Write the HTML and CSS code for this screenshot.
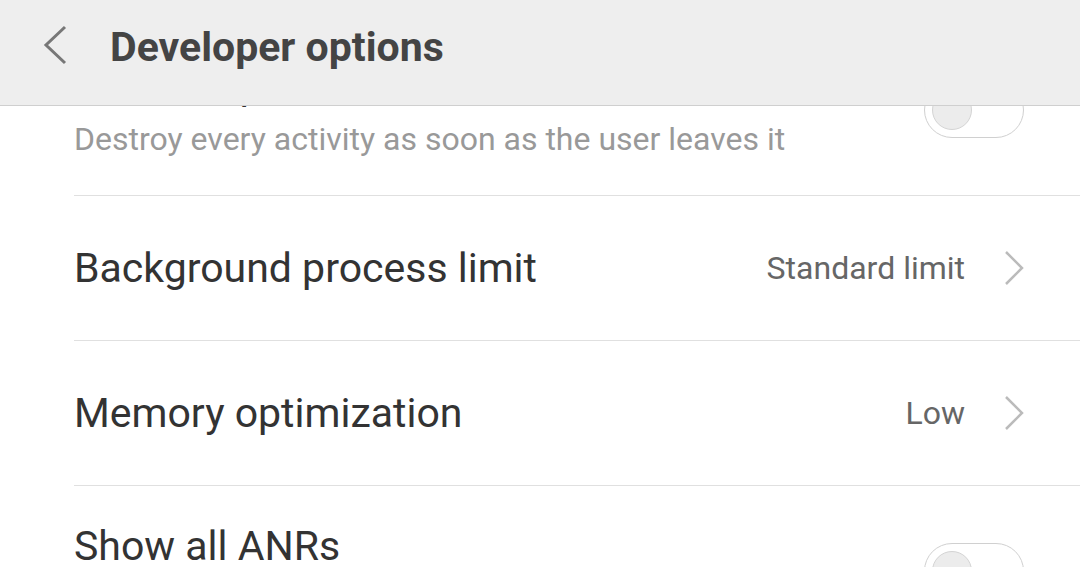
FILE: index.html
```html
<!DOCTYPE html>
<html>
<head>
<meta charset="utf-8">
<link rel="stylesheet" href="styles.css">
</head>
<body>
<div class="screen">
  <header class="appbar">
    <svg class="back" width="26" height="40" viewBox="0 0 26 40"><polyline points="23,2 4,20 23,38" fill="none" stroke="#777" stroke-width="3"/></svg>
    <h1 class="title">Developer options</h1>
  </header>
  <main class="list">
    <div class="row two">
      <div class="text">
        <div class="label">Don't keep activities</div>
        <div class="sub">Destroy every activity as soon as the user leaves it</div>
      </div>
      <div class="toggle"><div class="knob"></div></div>
    </div>
    <div class="row one">
      <div class="text"><div class="label">Background process limit</div></div>
      <div class="value">Standard limit</div>
      <svg class="chev" width="22" height="36" viewBox="0 0 22 36"><polyline points="2,2 18,18 2,34" fill="none" stroke="#bbb" stroke-width="2.5"/></svg>
    </div>
    <div class="row one">
      <div class="text"><div class="label">Memory optimization</div></div>
      <div class="value">Low</div>
      <svg class="chev" width="22" height="36" viewBox="0 0 22 36"><polyline points="2,2 18,18 2,34" fill="none" stroke="#bbb" stroke-width="2.5"/></svg>
    </div>
    <div class="row two">
      <div class="text">
        <div class="label">Show all ANRs</div>
        <div class="sub">Show App Not Responding dialog for background apps</div>
      </div>
      <div class="toggle"><div class="knob"></div></div>
    </div>
  </main>
</div>
</body>
</html>
```
FILE: styles.css
```css
html, body { margin: 0; padding: 0; }
body { font-family: Roboto, "Noto Sans", sans-serif; background: #fff; }
.screen { position: relative; width: 1080px; height: 567px; overflow: hidden; background: #fff; }
.appbar {
  position: absolute; top: 0; left: 0; right: 0; z-index: 2;
  height: 106px; box-sizing: border-box;
  background: #eeeeee; border-bottom: 1px solid #cfcfcf;
  display: flex; align-items: center;
}
.back { margin-left: 42px; margin-top: -16px; }
.title { margin: -12px 0 0 42px; font-size: 41px; font-weight: 700; color: #444; }
.list { padding-top: 25px; }
.row {
  display: flex; align-items: center;
  margin-left: 74px; padding-right: 54px;
  border-bottom: 1px solid #e0e0e0;
  box-sizing: border-box;
}
.row.two { height: 171px; }
.row.one { height: 145px; }
.text { flex: 1; }
.label { font-size: 41px; color: #333; line-height: 50px; }
.sub { font-size: 32px; color: #999; line-height: 42px; margin-top: 8px; }
.value { font-size: 32px; color: #666; margin-right: 39px; }
.chev { display: block; }
.toggle {
  width: 100px; height: 56px; box-sizing: border-box; margin-right: 2px;
  border: 1.5px solid #d0d0d0; border-radius: 28px; background: #fff;
  position: relative;
}
.knob {
  position: absolute; left: 7px; top: 6.5px;
  width: 40px; height: 40px; box-sizing: border-box;
  border-radius: 50%; background: #ececec; border: 1.5px solid #d4d4d4;
}
```
